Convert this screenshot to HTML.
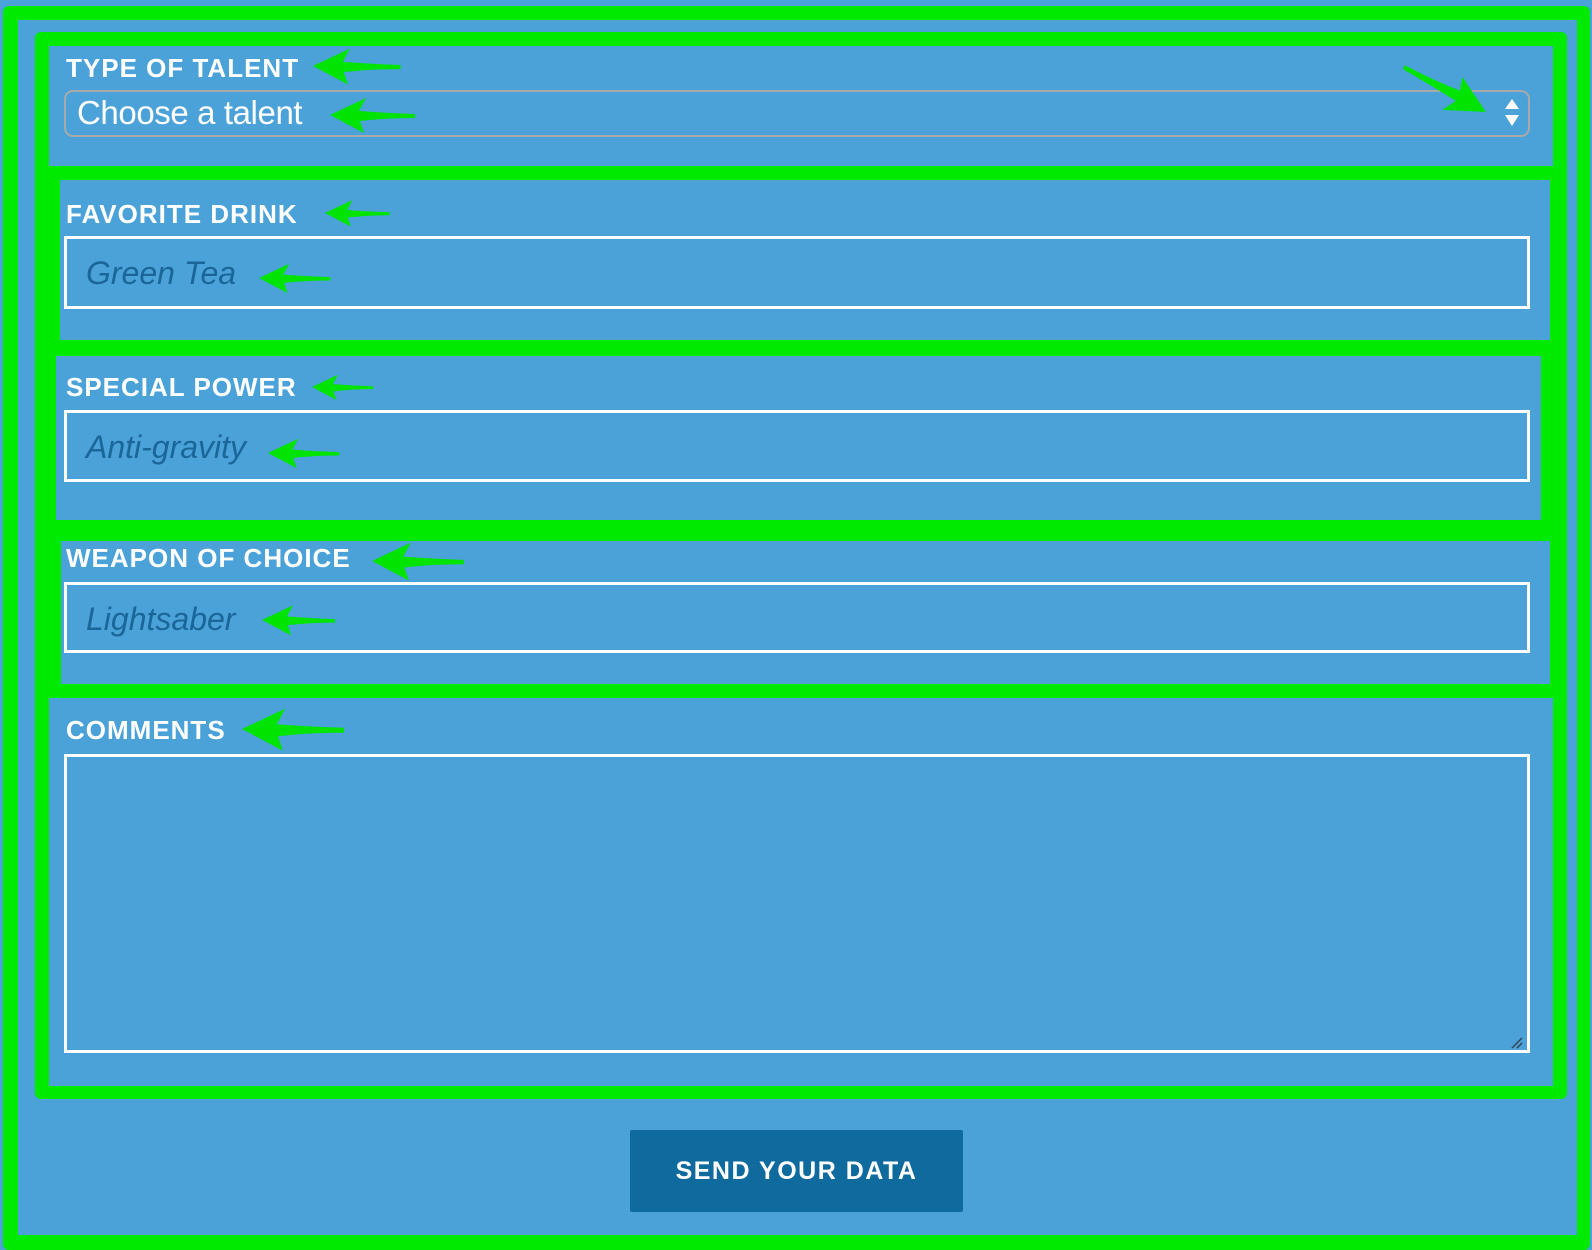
<!DOCTYPE html>
<html><head><meta charset="utf-8"><style>
*{margin:0;padding:0;box-sizing:border-box}
body{width:1592px;height:1250px;background:#4aa2d9;position:relative;overflow:hidden;font-family:"Liberation Sans",sans-serif}
.a{position:absolute}
.g{background:#00ea00}
.b{background:#4aa2d9}
.lbl{position:absolute;left:66px;color:#fff;font-weight:bold;font-size:26px;letter-spacing:1px;line-height:1}
.inp{position:absolute;left:64px;width:1466px;border:3px solid #fff}
.ph{position:absolute;left:19px;color:#1b6699;font-style:italic;font-size:32px;line-height:1}
</style></head><body>
<div class="a g" style="left:3px;top:6px;width:1587px;height:1244px;border-radius:6px"></div>
<div class="a b" style="left:18px;top:20px;width:1559px;height:1215px"></div>
<div class="a g" style="left:35px;top:32px;width:1532px;height:1067px;border-radius:6px"></div>
<div class="a b" style="left:49px;top:46px;width:1504px;height:120px"></div>
<div class="a b" style="left:60px;top:180px;width:1490px;height:160px"></div>
<div class="a b" style="left:56px;top:356px;width:1485px;height:164px"></div>
<div class="a b" style="left:61px;top:541px;width:1489px;height:143px"></div>
<div class="a b" style="left:49px;top:698px;width:1504px;height:388px"></div>

<div class="lbl" style="top:55px">TYPE OF TALENT</div>
<div class="a" style="left:64px;top:90px;width:1466px;height:47px;border:2px solid #a9a9a9;border-radius:9px"></div>
<div class="a" style="left:77px;top:95px;color:#fff;font-size:33px;line-height:36px;letter-spacing:-0.4px">Choose a talent</div>
<svg class="a" style="left:1503px;top:97px" width="18" height="34"><polygon points="9,2 16,12 2,12" fill="#fff"/><polygon points="2,18 16,18 9,29" fill="#fff"/></svg>

<div class="lbl" style="top:201px">FAVORITE DRINK</div>
<div class="inp" style="top:236px;height:73px"><div class="ph" style="top:18px">Green Tea</div></div>

<div class="lbl" style="top:374px">SPECIAL POWER</div>
<div class="inp" style="top:410px;height:72px"><div class="ph" style="top:18px">Anti-gravity</div></div>

<div class="lbl" style="top:545px">WEAPON OF CHOICE</div>
<div class="inp" style="top:582px;height:71px"><div class="ph" style="top:18px">Lightsaber</div></div>

<div class="lbl" style="top:717px">COMMENTS</div>
<div class="inp" style="top:754px;height:299px"></div>
<svg class="a" style="left:1510px;top:1036px" width="14" height="14"><path d="M2 12L12 2M7 12L12 7" stroke="#345" stroke-width="1.5"/></svg>

<div class="a" style="left:630px;top:1130px;width:333px;height:82px;background:#0f6a9e;border-radius:2px;color:#fff;font-weight:bold;font-size:25px;text-align:center;line-height:82px;letter-spacing:1.5px">SEND YOUR DATA</div>

<svg class="a" style="left:0;top:0" width="1592" height="1250">
<defs><path id="ar" d="M0 0 L36 -17 L29 -4 Q55 -2 85 -1 L85 3 Q55 3 30 6 L34 18 Z" fill="#00e400"/></defs>
<use href="#ar" transform="translate(313,66) scale(1.03)"/>
<use href="#ar" transform="translate(330,115) scale(1)"/>
<use href="#ar" transform="translate(325,213) scale(0.76)"/>
<use href="#ar" transform="translate(259,278) scale(0.84)"/>
<use href="#ar" transform="translate(312,387) scale(0.72)"/>
<use href="#ar" transform="translate(268,453) scale(0.84)"/>
<use href="#ar" transform="translate(372,561) scale(1.08)"/>
<use href="#ar" transform="translate(262,620) scale(0.86)"/>
<use href="#ar" transform="translate(242,729) scale(1.2)"/>
<use href="#ar" transform="translate(1486,112) rotate(-152) scale(1.1)"/>
</svg>
</body></html>
